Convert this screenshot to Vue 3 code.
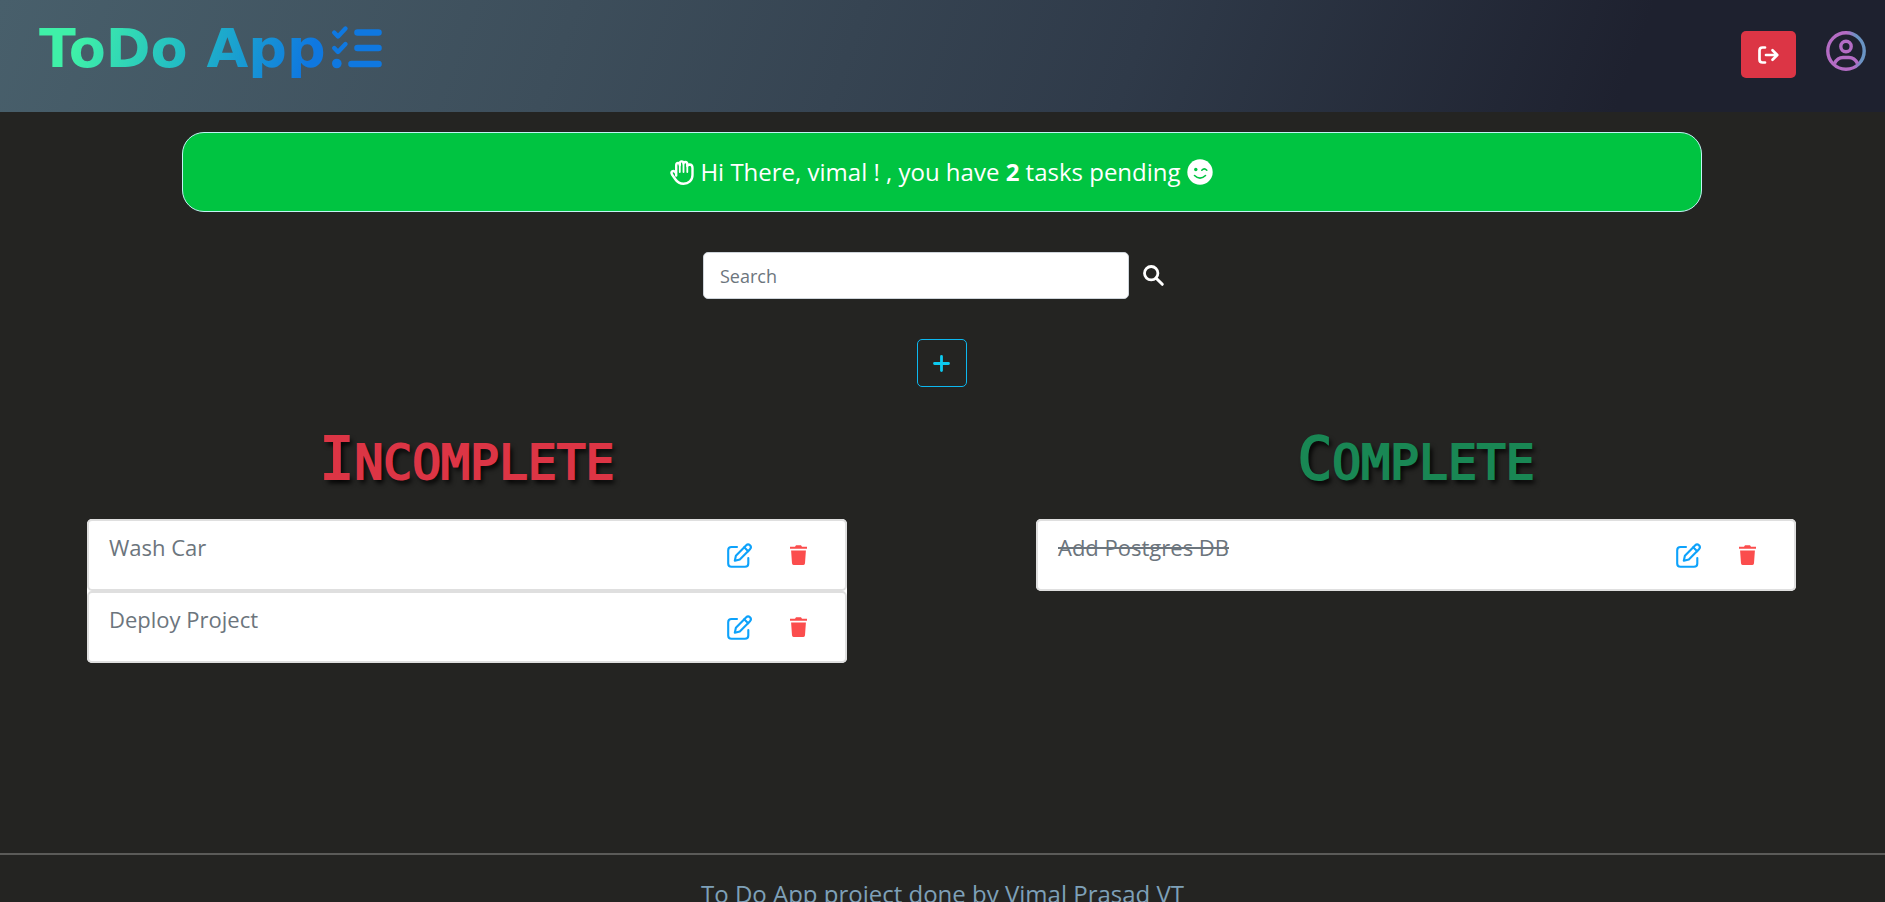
<script setup>
import { ref } from 'vue'

const user = 'vimal'
const query = ref('')
const groups = ref([
  {
    id: 'incomplete',
    title: 'Incomplete',
    done: false,
    tasks: ['Wash Car', 'Deploy Project'],
  },
  {
    id: 'complete',
    title: 'Complete',
    done: true,
    tasks: ['Add Postgres DB'],
  },
])
</script>

<template>
  <div class="page">
    <header class="topbar">
      <a class="brand" href="#">
        <span class="brand-name">ToDo App</span>
        <svg class="brand-icon" viewBox="0 0 50 42" aria-hidden="true">
          <g fill="none" stroke="#0f78e0" stroke-linecap="round" stroke-linejoin="round">
            <path d="M2.200 6.500 L6 10.500 L13.500 2.500" stroke-width="4.400" />
            <path d="M2.200 22 L6 26 L13.500 18" stroke-width="4.400" />
            <path d="M25.500 6.500 H46.500 M25.500 22 H46.500 M19.500 38 H46.500" stroke-width="6.600" />
          </g>
          <circle cx="4.800" cy="37.500" r="4.800" fill="#0f78e0" />
        </svg>
      </a>
      <nav class="actions">
        <button class="logout" type="button" aria-label="Log out">
          <svg viewBox="0 0 21 18" aria-hidden="true">
            <g fill="none" stroke="#fff" stroke-width="2.700" stroke-linecap="round" stroke-linejoin="round">
              <path d="M7 1.500 H4.500 Q1.500 1.500 1.500 4.500 V13.500 Q1.500 16.500 4.500 16.500 H7" />
              <path d="M8 9 H19 M14.500 4.300 L19.300 9 L14.500 13.700" />
            </g>
          </svg>
        </button>
        <a class="profile" href="#" aria-label="Profile">
          <svg viewBox="0 0 40 40" aria-hidden="true">
            <defs>
              <linearGradient id="ring" x1="0" y1="0.600" x2="1" y2="0.400">
                <stop offset="0.620" stop-color="#b46cc4" />
                <stop offset="0.850" stop-color="#6a94c4" />
              </linearGradient>
            </defs>
            <g fill="none" stroke-width="3.400">
              <circle cx="20" cy="20" r="18.200" stroke="url(#ring)" />
              <circle cx="20" cy="15.500" r="5.200" stroke="#b46cc4" />
              <path d="M8.500 32.500 C10.500 28.500 13.500 26.500 17 26.500 H23 C26.500 26.500 29.500 28.500 31.500 32.500" stroke="#b46cc4" />
            </g>
          </svg>
        </a>
      </nav>
    </header>

    <main class="content">
      <p class="greeting">
        <svg class="hand" viewBox="0 0 24 25" aria-hidden="true">
          <g fill="none" stroke="#fff" stroke-width="2.400" stroke-linecap="round" stroke-linejoin="round">
            <path d="M6.200 15.500 V5.200 Q6.200 3 8 3 Q9.800 3 9.800 5 V3.500 Q9.800 1.400 11.600 1.400 Q13.500 1.400 13.500 3.500 Q13.600 2 15.400 2 Q17.300 2 17.300 4.500 V6 Q17.500 4.500 19.500 4.500 Q22.500 4.600 22.500 8 V15 C22.500 20.500 18.500 23.700 13.500 23.700 C9.500 23.700 7.500 22.500 5.500 19.500 L2 14.500 Q0.800 12.200 2.300 11.200 Q3.900 10.300 5.300 12.200 L6.200 13.500" />
            <path d="M9.800 4.500 V12 M13.500 3.500 V12 M17.300 5.500 V12" stroke-width="1.800" />
          </g>
        </svg>
        <span>Hi There, {{ user }} ! , you have <strong>2</strong> tasks pending</span>
        <svg class="smile" viewBox="0 0 26 26" aria-hidden="true">
          <circle cx="13" cy="13" r="12.700" fill="#fff" />
          <circle cx="8.800" cy="10.500" r="1.700" fill="#00c441" />
          <path d="M14.800 11.200 Q17.300 8.600 19.800 11.200 M7.500 16.500 Q13 21.800 18.500 16.500" fill="none" stroke="#00c441" stroke-width="1.600" stroke-linecap="round" />
        </svg>
      </p>

      <form class="search" role="search" @submit.prevent>
        <input v-model="query" type="text" placeholder="Search" aria-label="Search" />
        <button type="submit" aria-label="Search tasks">
          <svg viewBox="0 0 21 21" aria-hidden="true">
            <circle cx="8.200" cy="8.200" r="6.700" fill="none" stroke="#fff" stroke-width="2.800" />
            <path d="M13.200 13.200 L19.300 19.300" stroke="#fff" stroke-width="3" stroke-linecap="round" />
          </svg>
        </button>
      </form>

      <button class="add" type="button" aria-label="Add task">
        <svg viewBox="0 0 17 17" aria-hidden="true">
          <path d="M8.500 1.500 V15.500 M1.500 8.500 H15.500" stroke="#0dcaf0" stroke-width="2.800" stroke-linecap="round" />
        </svg>
      </button>

      <div class="columns">
        <section v-for="group in groups" :key="group.id" :class="group.id">
          <h2>{{ group.title }}</h2>
          <ul>
            <li v-for="task in group.tasks" :key="task">
              <span :class="['name', { done: group.done }]">{{ task }}</span>
              <button class="edit" type="button" :aria-label="`Edit ${task}`">
                <svg viewBox="0 0 25 25" aria-hidden="true">
                  <g fill="none" stroke="#0da2fb" stroke-width="2.100" stroke-linecap="round" stroke-linejoin="round">
                    <path d="M10 4 H4.500 Q1.200 4 1.200 7.200 V20.500 Q1.200 23.800 4.500 23.800 H18 Q21.300 23.800 21.300 20.500 V15" />
                    <path d="M7.800 17.800 L8.900 12.800 L19 2.400 Q21 0.400 23 2.200 Q24.900 4.200 23 6.200 L12.800 16.500 Z" />
                    <path d="M17.200 4.300 L21.200 8.200" />
                  </g>
                </svg>
              </button>
              <button class="remove" type="button" :aria-label="`Delete ${task}`">
                <svg viewBox="0 0 17 20" aria-hidden="true">
                  <path d="M0 1.700 H5 L6 0.300 H11 L12 1.700 H17 V3.800 H0 Z M1.100 5.600 H15.900 L15 18.300 Q14.900 19.900 13.400 19.900 H3.600 Q2.100 19.900 2 18.300 Z" fill="#fb4d4d" />
                </svg>
              </button>
            </li>
          </ul>
        </section>
      </div>
    </main>

    <footer class="footer">To Do App project done by Vimal Prasad VT</footer>
  </div>
</template>

<style>
html,
body {
  background: #242422;
  overflow: hidden;
}
</style>

<style scoped>
* {
  box-sizing: border-box;
}

.page {
  display: flex;
  flex-direction: column;
  height: 100vh;
  overflow: hidden;
  background: #242422;
  font-family: "Open Sans", "Noto Sans", sans-serif;
}

svg {
  display: block;
  overflow: visible;
}

button {
  padding: 0;
  border: 0;
  background: none;
  cursor: pointer;
}

.topbar {
  display: flex;
  flex: none;
  align-items: flex-start;
  justify-content: space-between;
  height: 112px;
  padding: 0 19px 0 39px;
  background: linear-gradient(110deg, #485f6b 0%, #3d4e5b 30%, #2f3a49 60%, #1e212f 86%);
}

.brand {
  display: flex;
  gap: 6px;
  padding-top: 19px;
  text-decoration: none;
}

.brand-name {
  background: linear-gradient(110deg, #3ff0a8 15%, #22bcc4 50%, #0f78e0 92%);
  background-clip: text;
  color: transparent;
  font: bold 54px/60px "DejaVu Sans", sans-serif;
}

.brand-icon {
  width: 50px;
  height: 42px;
  margin-top: 7px;
}

.actions {
  display: flex;
  gap: 30px;
  padding-top: 31px;
}

.logout {
  display: grid;
  place-items: center;
  width: 55px;
  height: 47px;
  border-radius: 5px;
  background: #dc3545;
}

.logout svg {
  width: 21px;
  height: 18px;
}

.profile svg {
  width: 40px;
  height: 40px;
}

.content {
  display: flex;
  flex: none;
  flex-direction: column;
  align-items: center;
  padding: 20px 89px 0 87px;
}

.greeting {
  display: flex;
  align-items: center;
  justify-content: center;
  gap: 6px;
  width: 100%;
  max-width: 1520px;
  height: 80px;
  margin: 0 0 40px;
  border: 1px solid #c0f4f4;
  border-radius: 22px;
  background: #00c441;
  color: #fff;
  font-size: 24px;
  line-height: 32px;
}

.hand {
  width: 24px;
  height: 25px;
}

.smile {
  width: 26px;
  height: 26px;
}

.search {
  display: flex;
  align-items: center;
  gap: 14px;
  margin: 0 16px 40px 0;
}

.search input {
  width: 426px;
  height: 47px;
  padding: 0 16px;
  border: 1px solid #ced4da;
  border-radius: 5px;
  background: #fff;
  color: #212529;
  font: 18px/28px "Open Sans", "Noto Sans", sans-serif;
}

.search input::placeholder {
  color: #6c757d;
  opacity: 1;
}

.search svg {
  width: 21px;
  height: 21px;
}

.add {
  display: grid;
  place-items: center;
  width: 50px;
  height: 48px;
  border: 1px solid #0db8f0;
  border-radius: 5px;
}

.add svg {
  width: 17px;
  height: 17px;
}

.columns {
  display: grid;
  grid-template-columns: 1fr 1fr;
  gap: 189px;
  width: 100%;
  min-height: 466px;
}

h2 {
  height: 72px;
  margin: 36px 0 24px;
  font: 48px/72px "DejaVu Sans Mono", monospace;
  text-align: center;
  text-shadow: 3px 4px 5px #000;
  text-transform: uppercase;
  -webkit-text-stroke: 2px currentColor;
}

h2::first-letter {
  font-size: 58px;
}

.incomplete h2 {
  color: #dc3545;
}

.complete h2 {
  color: #198754;
}

ul {
  margin: 0;
  padding: 0;
  border-radius: 5px;
  background: #fff;
  list-style: none;
}

li {
  display: flex;
  align-items: flex-start;
  height: 72px;
  padding: 22px 38px 0 20px;
  border: 2px solid #dfdfdf;
  border-radius: 5px;
}

.name {
  flex: 1;
  margin-top: -12px;
  color: #6c757d;
  font-size: 22px;
  font-weight: 500;
  line-height: 32px;
}

.done {
  text-decoration: line-through;
}

.edit svg {
  width: 25px;
  height: 25px;
}

.remove {
  margin: 2px 0 0 38px;
}

.remove svg {
  width: 17px;
  height: 20px;
}

.footer {
  flex: none;
  padding-top: 22px;
  border-top: 2px solid #5b5b59;
  color: #7ea0b8;
  font-size: 24px;
  line-height: 34px;
  text-align: center;
}
</style>
